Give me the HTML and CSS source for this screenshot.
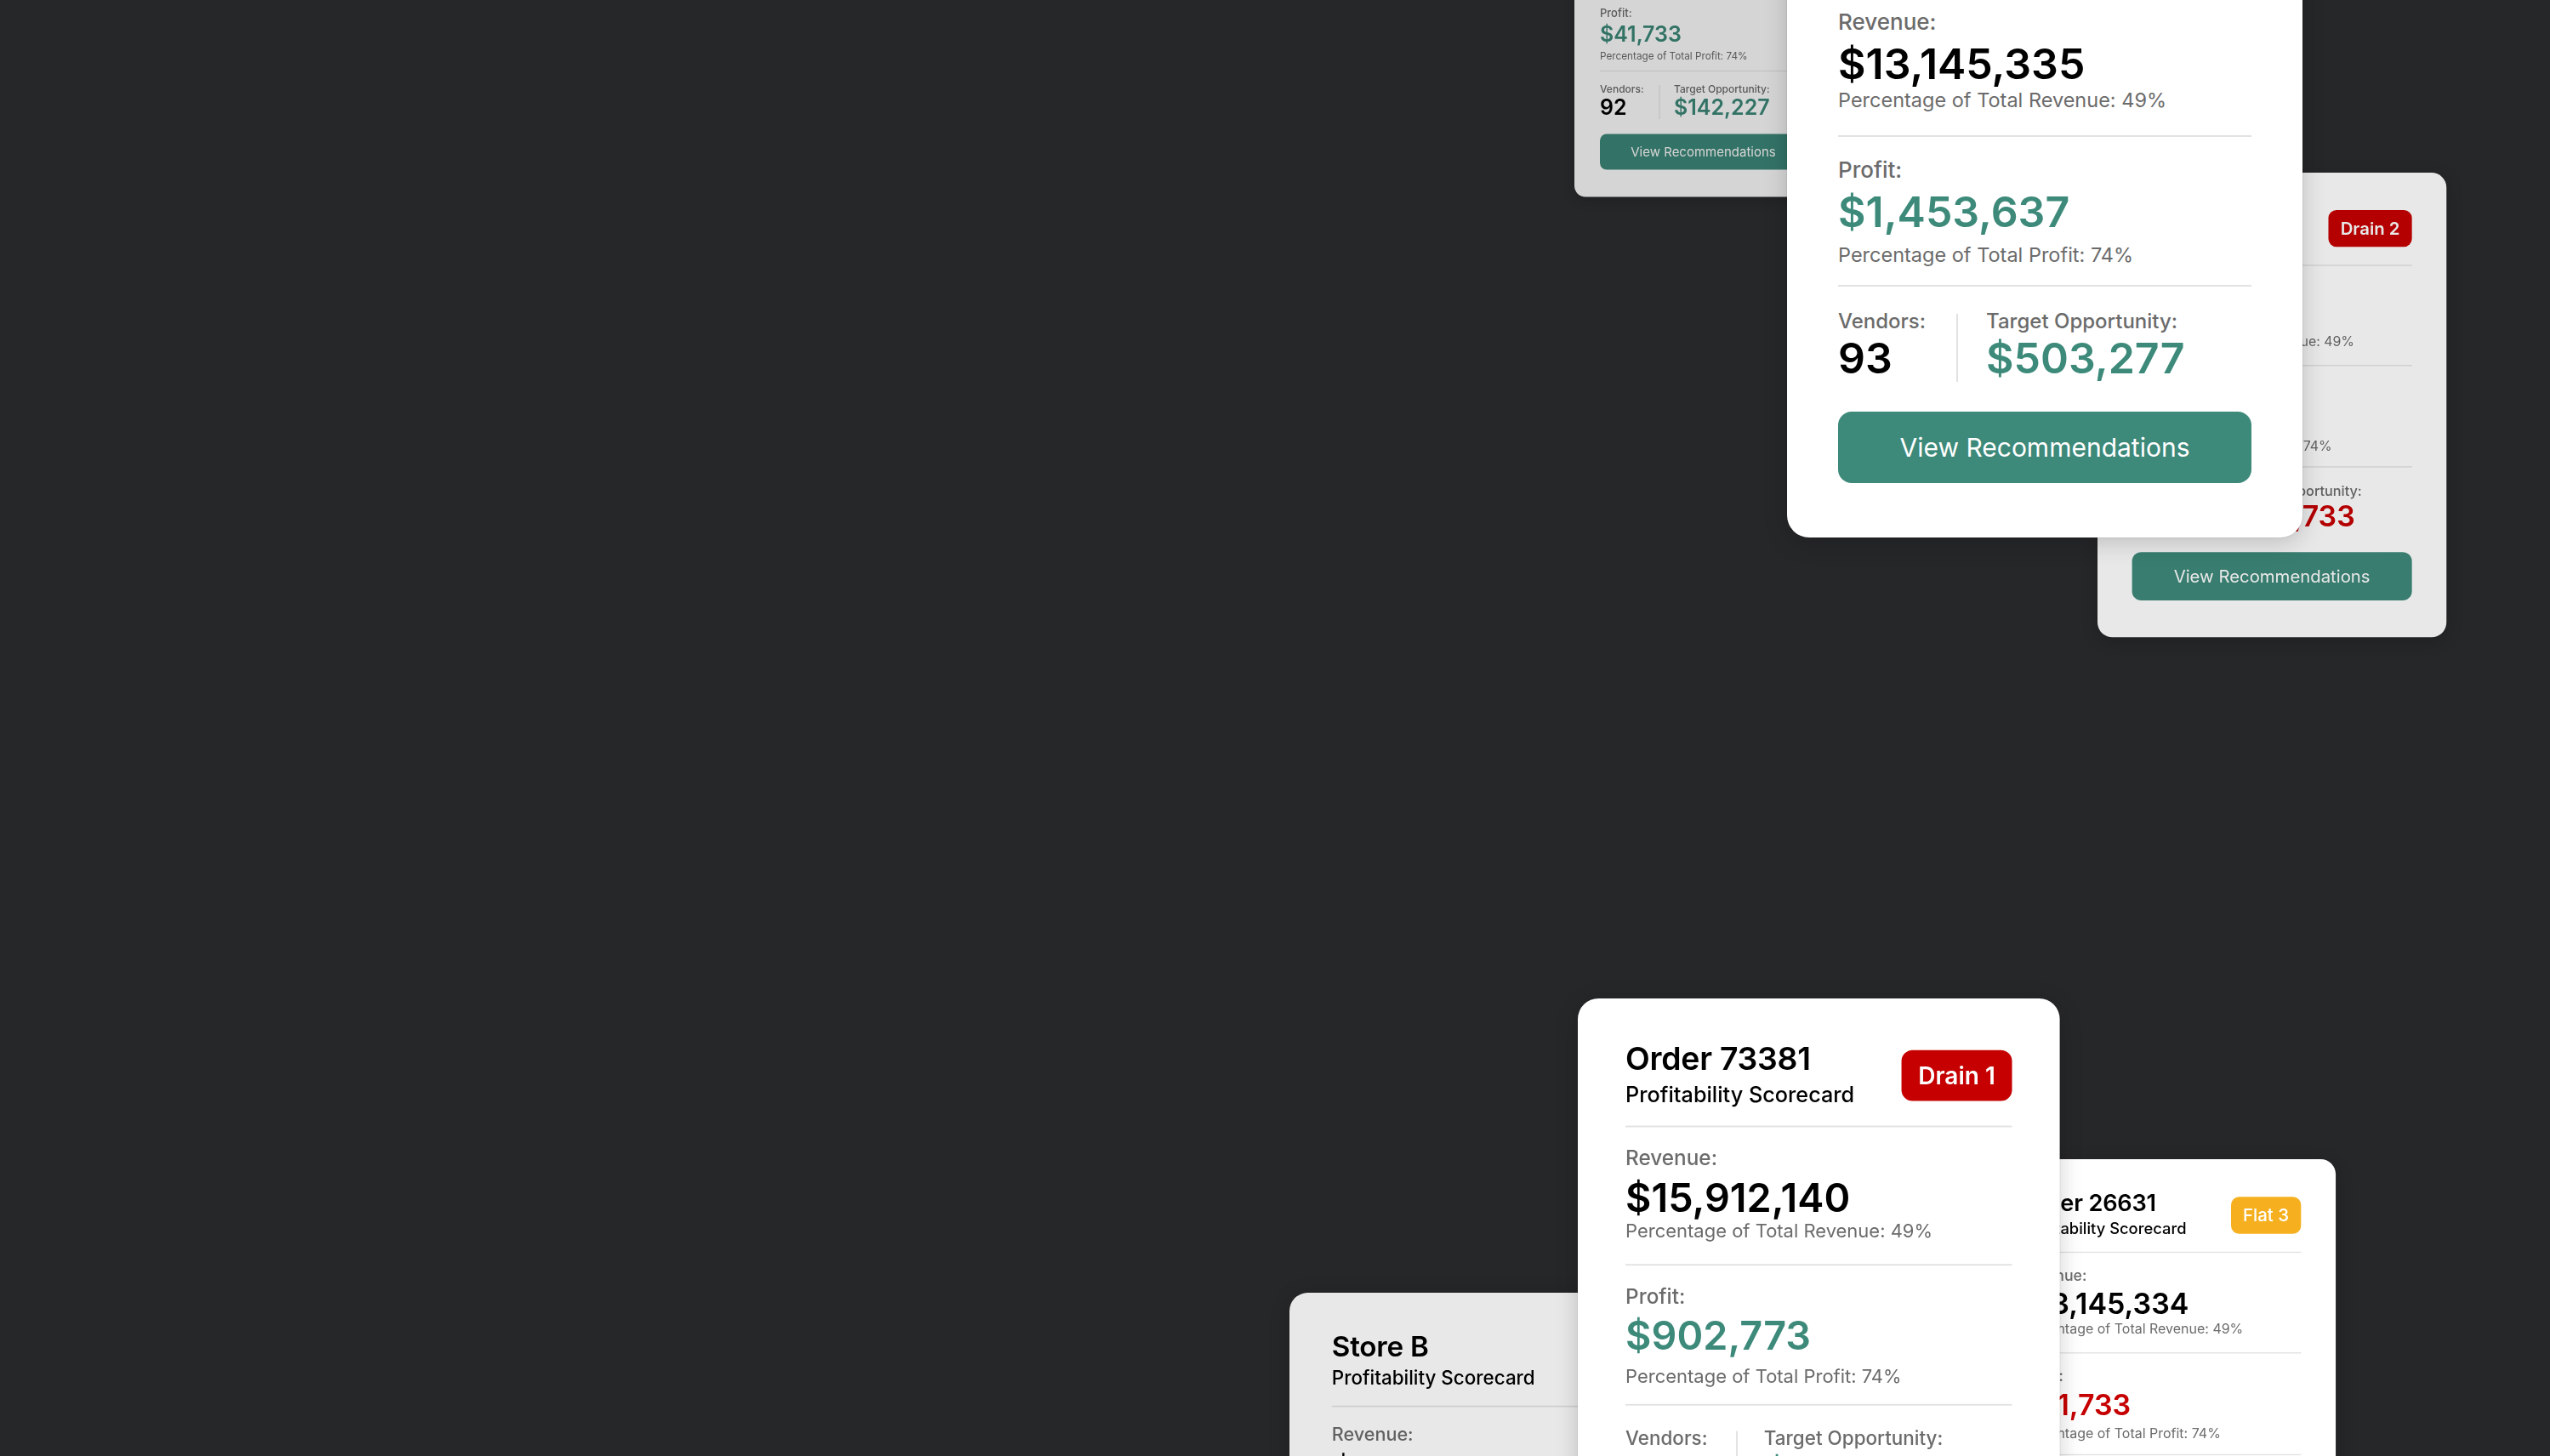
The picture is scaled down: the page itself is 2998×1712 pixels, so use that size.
FILE: index.html
```html
<!DOCTYPE html>
<html lang="en">
<head>
<meta charset="utf-8">
<title>Profitability Scorecards</title>
<link rel="stylesheet" href="styles.css">
</head>
<body>
<main class="canvas">

  <section class="card card-a dim-strong">
    <header class="card-head">
      <div class="head-text">
        <h2 class="title">Store A</h2>
        <p class="subtitle">Profitability Scorecard</p>
      </div>
      <span class="badge badge-red">Drain 3</span>
    </header>
    <div class="metric">
      <div class="label">Revenue:</div>
      <div class="value">$3,145,334</div>
      <div class="pct">Percentage of Total Revenue: 49%</div>
    </div>
    <div class="metric metric-profit">
      <div class="label">Profit:</div>
      <div class="value green">$41,733</div>
      <div class="pct">Percentage of Total Profit: 74%</div>
    </div>
    <div class="split">
      <div class="split-col vendors">
        <div class="label">Vendors:</div>
        <div class="value">92</div>
      </div>
      <div class="split-col target">
        <div class="label">Target Opportunity:</div>
        <div class="value green">$142,227</div>
      </div>
    </div>
    <button class="btn">View Recommendations</button>
  </section>

  <section class="card card-c dim">
    <header class="card-head">
      <div class="head-text">
        <h2 class="title">Order 48213</h2>
        <p class="subtitle">Profitability Scorecard</p>
      </div>
      <span class="badge badge-red">Drain 2</span>
    </header>
    <div class="metric">
      <div class="label">Revenue:</div>
      <div class="value">$9,412,875</div>
      <div class="pct">Percentage of Total Revenue: 49%</div>
    </div>
    <div class="metric metric-profit">
      <div class="label">Profit:</div>
      <div class="value red">$38,120</div>
      <div class="pct">Percentage of Total Profit: 74%</div>
    </div>
    <div class="split">
      <div class="split-col vendors">
        <div class="label">Vendors:</div>
        <div class="value">88</div>
      </div>
      <div class="split-col target">
        <div class="label">Target Opportunity:</div>
        <div class="value red">$141,733</div>
      </div>
    </div>
    <button class="btn">View Recommendations</button>
  </section>

  <section class="card card-b">
    <header class="card-head">
      <div class="head-text">
        <h2 class="title">Store A</h2>
        <p class="subtitle">Profitability Scorecard</p>
      </div>
      <span class="badge badge-green">Top 1</span>
    </header>
    <div class="metric">
      <div class="label">Revenue:</div>
      <div class="value">$13,145,335</div>
      <div class="pct">Percentage of Total Revenue: 49%</div>
    </div>
    <div class="metric metric-profit">
      <div class="label">Profit:</div>
      <div class="value green">$1,453,637</div>
      <div class="pct">Percentage of Total Profit: 74%</div>
    </div>
    <div class="split">
      <div class="split-col vendors">
        <div class="label">Vendors:</div>
        <div class="value">93</div>
      </div>
      <div class="split-col target">
        <div class="label">Target Opportunity:</div>
        <div class="value green">$503,277</div>
      </div>
    </div>
    <button class="btn">View Recommendations</button>
  </section>

  <section class="card card-f dim">
    <header class="card-head">
      <div class="head-text">
        <h2 class="title">Store B</h2>
        <p class="subtitle">Profitability Scorecard</p>
      </div>
      <span class="badge badge-yellow">Flat 2</span>
    </header>
    <div class="metric">
      <div class="label">Revenue:</div>
      <div class="value">$11,208,412</div>
      <div class="pct">Percentage of Total Revenue: 49%</div>
    </div>
  </section>

  <section class="card card-e">
    <header class="card-head">
      <div class="head-text">
        <h2 class="title">Order 26631</h2>
        <p class="subtitle">Profitability Scorecard</p>
      </div>
      <span class="badge badge-yellow">Flat 3</span>
    </header>
    <div class="metric">
      <div class="label">Revenue:</div>
      <div class="value">$13,145,334</div>
      <div class="pct">Percentage of Total Revenue: 49%</div>
    </div>
    <div class="metric metric-profit">
      <div class="label">Profit:</div>
      <div class="value red">$41,733</div>
      <div class="pct">Percentage of Total Profit: 74%</div>
    </div>
  </section>

  <section class="card card-d">
    <header class="card-head">
      <div class="head-text">
        <h2 class="title">Order 73381</h2>
        <p class="subtitle">Profitability Scorecard</p>
      </div>
      <span class="badge badge-red">Drain 1</span>
    </header>
    <div class="metric">
      <div class="label">Revenue:</div>
      <div class="value">$15,912,140</div>
      <div class="pct">Percentage of Total Revenue: 49%</div>
    </div>
    <div class="metric metric-profit">
      <div class="label">Profit:</div>
      <div class="value green">$902,773</div>
      <div class="pct">Percentage of Total Profit: 74%</div>
    </div>
    <div class="split">
      <div class="split-col vendors">
        <div class="label">Vendors:</div>
        <div class="value">87</div>
      </div>
      <div class="split-col target">
        <div class="label">Target Opportunity:</div>
        <div class="value green">$312,540</div>
      </div>
    </div>
    <button class="btn">View Recommendations</button>
  </section>

</main>
</body>
</html>
```

FILE: styles.css
```css
* { box-sizing: border-box; }

html, body {
  margin: 0;
  padding: 0;
  background: #262729;
}

body {
  font-family: Inter, "Noto Sans", "Liberation Sans", sans-serif;
  color: #000;
}

.canvas {
  position: relative;
  width: 2998px;
  height: 1712px;
  overflow: hidden;
  background: #262729;
}

/* ---------- card (base size = scale 1) ---------- */
.card {
  position: absolute;
  width: 606px;
  padding: 56px 60px 64px;
  background: #fff;
  border-radius: 26px;
  box-shadow: 0 0 0 1px rgba(0, 0, 0, 0.06), 0 6px 28px rgba(0, 0, 0, 0.18);
  transform-origin: 0 0;
  display: flex;
  flex-direction: column;
}

.dim { filter: brightness(0.91); }
.dim-strong { filter: brightness(0.835); }

.card-a { left: 1851px; top: -172px; transform: scale(0.5); }
.card-b { left: 2101px; top: -175px; }
.card-c { left: 2466px; top: 203px; transform: scale(0.677); }
.card-d { left: 1855px; top: 1174px; transform: scale(0.935); }
.card-e { left: 2334px; top: 1363px; transform: scale(0.68); }
.card-f { left: 1516px; top: 1520px; transform: scale(0.83); }

/* header */
.card-head {
  display: flex;
  align-items: center;
  justify-content: space-between;
  padding-bottom: 24px;
  border-bottom: 2px solid #e2e2e2;
}

.title {
  margin: 0;
  font-size: 40px;
  line-height: 40px;
  font-weight: 600;
  letter-spacing: -0.3px;
}

.subtitle {
  margin: 10px 0 0;
  font-size: 27px;
  line-height: 30px;
  font-weight: 500;
}

.badge {
  display: inline-flex;
  align-items: center;
  justify-content: center;
  height: 64px;
  padding: 0 21px;
  border-radius: 14px;
  color: #fff;
  font-size: 30px;
  font-weight: 600;
  margin-top: 2px;
}

.badge-red { background: #c60000; }
.badge-yellow { background: #f6b01f; font-weight: 500; }
.badge-green { background: #3d897a; }

/* metric sections */
.metric {
  padding: 24px 0 26px;
  border-bottom: 2px solid #e2e2e2;
}

.metric-profit .pct { margin-top: 8px; }
.metric-profit { padding-bottom: 20px; }

.label {
  font-size: 26px;
  line-height: 30px;
  font-weight: 500;
  color: #6b6b6b;
}

.value {
  font-size: 50px;
  line-height: 56px;
  font-weight: 600;
  margin-top: 6px;
  color: #000;
}

.value.green { color: #3d8a7a; }
.value.red { color: #c60000; }

.pct {
  font-size: 23.5px;
  line-height: 30px;
  color: #6b6b6b;
}

/* vendors / target row */
.split {
  display: flex;
  padding-top: 26px;
}

.split .label { font-size: 24px; }
.split .value { margin-top: 0; }

.split-col.vendors { padding-right: 36px; }

.split-col.target {
  padding-left: 33px;
  border-left: 2px solid #e2e2e2;
  margin: 6px 0 3px;
}

.split-col.target .label { margin-top: -6px; }

.btn {
  margin-top: 32px;
  height: 84px;
  border: 0;
  border-radius: 16px;
  background: #3d897a;
  color: #fff;
  font-family: inherit;
  font-size: 30px;
  font-weight: 400;
}
```
